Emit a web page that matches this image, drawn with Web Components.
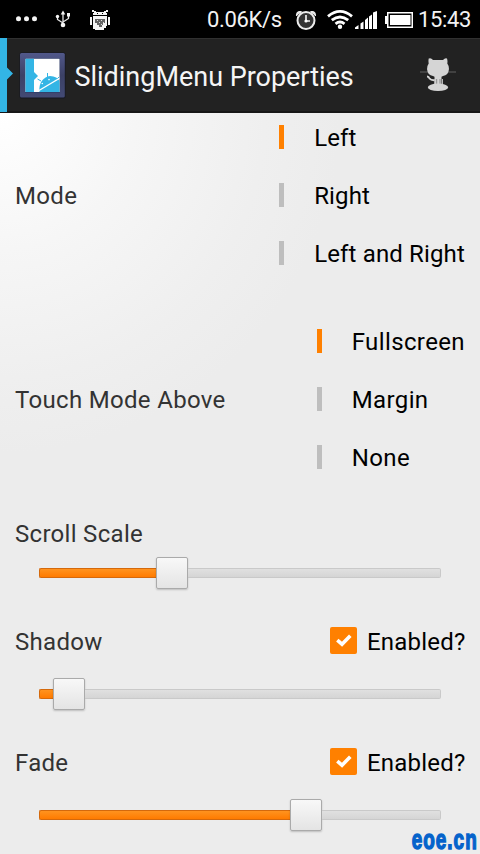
<!DOCTYPE html>
<html lang="en">
<head>
<meta charset="utf-8">
<title>SlidingMenu Properties</title>
<style>
html,body{margin:0;padding:0;background:#ececec}
body{width:480px;height:854px;overflow:hidden;font-family:Roboto,"Noto Sans",sans-serif;font-size:24px;color:#000}
</style>
</head>
<body>
<properties-app></properties-app>
<script>
function define(name, html, setup) {
  const template = document.createElement('template');
  template.innerHTML = html;
  customElements.define(name, class extends HTMLElement {
    constructor() {
      super();
      this.attachShadow({mode: 'open'}).append(template.content.cloneNode(true));
    }
    connectedCallback() { if (setup) setup(this, this.shadowRoot); }
  });
}

define('status-bar', `
<style>
:host{display:flex;height:38px;background:#000;color:#f3f3f3;align-items:center;box-sizing:border-box;font-size:22px;line-height:38px}
svg{display:block;flex:none}
.rate{margin-left:97px;width:82px;letter-spacing:-.35px;white-space:nowrap;padding-top:2px}
.time{margin-left:5px;letter-spacing:-.35px;padding-top:2px}
</style>
<svg width="110" height="38" viewBox="0 0 110 38" fill="#f5f5f5">
  <circle cx="18.500" cy="18.700" r="2.500"/><circle cx="26.500" cy="18.700" r="2.500"/><circle cx="34.500" cy="18.700" r="2.500"/>
  <g fill="none" stroke="#e6e6e6" stroke-width="1.300"><path d="M63 13v12M57.500 16v3.500l5.500 3.500M68.500 15v3.500l-5.500 3.500"/></g>
  <path d="M60.700 14.500L63 10.500l2.300 4z"/><circle cx="63" cy="25" r="2.300"/><circle cx="57.500" cy="16.500" r="1.700"/><path d="M67 13h3v3.500h-3z"/>
  <path d="M92 10h2v1h2v1h8v-1h2v-1h2v2h-2v1h1v2H93v-2h1v-1h-2z"/><path d="M90 17h2v8h-2zM108 17h2v8h-2zM93 16h14v10h-1v2h-2v2H95v-1h-2z"/>
  <path fill="#000" d="M97 13h1v1h-1zM102 13h1v1h-1z"/>
  <path fill="#666" d="M95 19h10v4h-2v2h-1v2h-3v-2h-2v-2h-2z"/>
  <path fill="#ddd" d="M97 20h1v1h-1zM101 20h1v1h-1zM99 22h1v1h-1zM103 22h1v1h-1zM101 24h1v1h-1z"/>
</svg>
<span class="rate">0.06K/s</span>
<svg width="124" height="38" viewBox="289 0 124 38" fill="#fff">
  <circle cx="306" cy="20.500" r="8.500" fill="#333" stroke="#ececec" stroke-width="2"/>
  <path d="M296 16c-.5-4 3-6 6-4.500l-1 1.500q-3 1-4 3zM316 16c.5-4-3-6-6-4.500l1 1.500q3 1 4 3z" fill="#e8e8e8"/>
  <path d="M306 15v6h4" fill="none" stroke="#eee" stroke-width="1.700"/><circle cx="306" cy="21" r="1.600"/>
  <g fill="none" stroke="#fff" stroke-width="2.800"><path d="M328 16.400q12-10 24 0M331.800 20.200q8.200-6.500 16.400 0M335.500 23.800q4.500-3.600 9 0"/></g>
  <circle cx="340" cy="26.800" r="2.200"/>
  <path d="M355 29v-1.500l3.500-2.500v4zM360.500 23.500l3-2v7.500h-3zM365 20l3-2.500V29h-3zM369 16.500l3-2V29h-3zM373 12.500l4-1.500v18h-4z"/>
  <path d="M387 12h26v16h-26v-4h-2v-8h2z"/><path d="M388.500 13.500h23v13h-23z" fill="#000"/><path d="M390 15h20.500v10H390z"/>
</svg>
<span class="time">15:43</span>`);

define('github-icon', `
<style>:host{display:block;width:36px;height:34px}svg{display:block}</style>
<svg width="36" height="34" viewBox="420 58 36 34">
  <path d="M420 72h8M448 72h8" stroke="#4c4c4c" stroke-width="1.700"/>
  <path fill="#d5d5d5" d="M429 58.500q2-.8 4 1.500h10q2-2.300 4-1.500.8 2.500.3 5 1.900 2.500 1.600 6-.5 5.500-5.900 6.500l-1.500.8V84h-7v-7.200l-1.500-.8q-5.400-1-5.900-6.500-.2-3.500 1.600-6-.5-2.500 0-5z"/>
  <path d="M427 76.500q1.800 0 2.500 2 1.500 2 5.500 1.700" fill="none" stroke="#d5d5d5" stroke-width="1.800"/>
  <path d="M436.700 79v5M440 79v5" stroke="#888" stroke-width="1"/>
  <path d="M434.800 79v5M442.500 79v5" stroke="#bbb" stroke-width="1"/>
  <ellipse cx="438" cy="87.300" rx="10.200" ry="3.700" fill="#d5d5d5"/>
</svg>`);

define('app-icon', `
<style>:host{display:block;width:47px;height:47px}svg{display:block}</style>
<svg width="47" height="47" viewBox="19 52 47 47">
  <defs><linearGradient id="g" x2="0" y2="1"><stop stop-color="#51588a"/><stop offset=".5" stop-color="#3c4166"/><stop offset="1" stop-color="#424a74"/></linearGradient>
  <clipPath id="c"><path d="M25.500 58.500h34v33.500h-34z"/></clipPath></defs>
  <rect x="19.500" y="52.500" width="46" height="46" rx="2" fill="#151620"/>
  <rect x="20" y="53" width="44.800" height="44.500" rx="1.500" fill="url(#g)"/>
  <path d="M25 58h35v35H25z" fill="#33406b"/>
  <path d="M25.500 58.700h34v33.300h-34z" fill="#fff"/>
  <path d="M25.500 58.700H34V72l4 4-4 4v12h-8.500z" fill="#33b5e5"/>
  <g clip-path="url(#c)"><path d="M39.500 92c-1-9 3.500-15 10.500-16 5 .4 8 2 10 5.500V92z" fill="#33b5e5"/>
  <path d="M47.500 73v4M37.500 79l3.500 2M59 77l-2.500 2.500" stroke="#33b5e5" stroke-width="1"/>
  <path d="M39 90.500L61 77.500" stroke="#fff" stroke-width="1.300"/><circle cx="42.300" cy="83.500" r=".8" fill="#fff"/><circle cx="49" cy="79.600" r=".8" fill="#fff"/></g>
</svg>`);

define('action-bar', `
<style>
:host{display:flex;height:75px;background:#222;border-top:1px solid #303030;border-bottom:2px solid #171717;box-sizing:border-box;align-items:center;color:#f5f5f5}
svg{display:block;flex:none;width:19px;height:74px;align-self:flex-start;margin-top:-1px}
h1{margin:0 0 0 8.500px;font-size:27px;font-weight:400;line-height:36px;flex:1;white-space:nowrap;letter-spacing:-.02px;padding-top:3px}
app-icon{margin-top:1px}
github-icon{margin-right:24px}
</style>
<svg viewBox="0 0 19 74"><path fill="#33b5e5" d="M0 0h7v29.500l6 6-6 6V74H0z"/></svg>
<app-icon></app-icon><h1><slot></slot></h1><github-icon></github-icon>`);

define('radio-option', `
<style>
:host{display:flex;height:58px;align-items:center;gap:30px;line-height:58px;white-space:nowrap;letter-spacing:var(--tracking,.15px)}
i{width:5px;height:24px;background:#bebebe}
:host([checked]) i{background:#ff8000}
span{padding-top:2px}
</style><i></i><span><slot></slot></span>`);

define('radio-setting', `
<style>
:host{display:flex;justify-content:space-between;align-items:center;height:174px;padding:0 15px;margin-bottom:30px}
label{color:#333;letter-spacing:.32px;padding-top:2px}
</style><label></label><div><slot></slot></div>`,
(el, root) => { root.querySelector('label').textContent = el.getAttribute('label'); });

define('check-box', `
<style>
:host{display:flex;align-items:center;gap:10px;letter-spacing:.2px;width:136px;margin-right:-1px}
svg{display:block;flex:none;margin-top:-3px}
</style>
<svg width="27" height="27"><rect width="27" height="27" rx="2" fill="#ff8000"/><path d="M7.300 13.200l4.700 4L20.300 8.800" fill="none" stroke="#fff" stroke-width="3.600"/></svg>
<span><slot></slot></span>`);

define('setting-title', `
<style>
:host{display:flex;justify-content:space-between;height:36px;line-height:36px;padding:0 15px;color:#333;letter-spacing:.3px}
::slotted(check-box){color:#000}
</style><span></span><slot></slot>`,
(el, root) => { root.querySelector('span').textContent = el.getAttribute('label'); });

define('seek-bar', `
<style>
:host{display:flex;align-items:center;height:42px;padding:0 39px;margin-bottom:30px}
.track{box-sizing:border-box;height:10px;border:1px solid #c9c9c9;background:linear-gradient(#e0e0e0,#d5d5d5)}
.done{width:var(--value);border-color:#d4690c;border-right:0;border-radius:2px 0 0 2px;background:linear-gradient(#ff931f,#ff7b00)}
.rest{flex:1;border-left:0;border-radius:0 2px 2px 0}
.thumb{box-sizing:border-box;width:32px;height:32px;border:1px solid #aaa;border-radius:2px;background:linear-gradient(#f8f8f8,#e4e4e4);box-shadow:0 1px 2px #0003}
</style><div class="track done"></div><div class="thumb"></div><div class="track rest"></div>`,
(el) => el.style.setProperty('--value', el.getAttribute('value') + 'px'));

define('site-mark', `
<style>
:host{position:absolute;right:2px;bottom:0;height:28px}
span{display:block;font:bold 28px/28px "Liberation Sans Narrow","Liberation Sans",sans-serif;color:#0563cb;-webkit-text-stroke:1.500px #0563cb;letter-spacing:1.500px;transform:scaleX(.675);transform-origin:right}
</style><span><slot></slot></span>`);

define('properties-app', `
<style>
:host{display:flex;flex-direction:column;position:relative;width:480px;height:854px;overflow:hidden}
main{flex:1;min-height:0;overflow:hidden;background:radial-gradient(circle 340px at 0 0,#fff 0,#f6f6f6 40%,#efefef 78%,#ececec 100%) #ececec}
.list{margin-top:-5px}
.tall{margin-bottom:13px}
.wide{--tracking:.38px}
</style>
<status-bar></status-bar>
<action-bar>SlidingMenu Properties</action-bar>
<main><div class="list">
  <radio-setting label="Mode"><radio-option checked>Left</radio-option><radio-option>Right</radio-option><radio-option>Left and Right</radio-option></radio-setting>
  <radio-setting class="wide" label="Touch Mode Above"><radio-option checked>Fullscreen</radio-option><radio-option>Margin</radio-option><radio-option>None</radio-option></radio-setting>
  <setting-title label="Scroll Scale"></setting-title><seek-bar value="117"></seek-bar>
  <setting-title class="tall" label="Shadow"><check-box>Enabled?</check-box></setting-title><seek-bar value="14"></seek-bar>
  <setting-title class="tall" label="Fade"><check-box>Enabled?</check-box></setting-title><seek-bar value="251"></seek-bar>
</div></main>
<site-mark>eoe.cn</site-mark>`);
</script>
</body>
</html>
